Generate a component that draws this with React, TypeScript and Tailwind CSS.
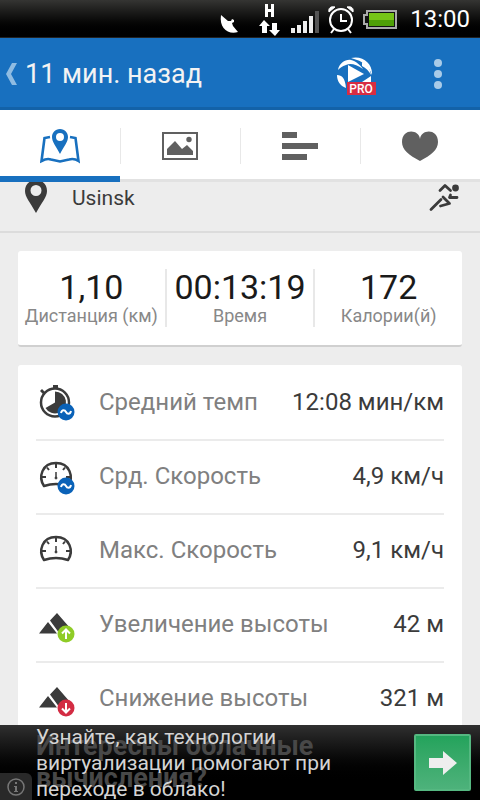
import type { ReactNode } from 'react';

const StatusBar = () => (
  <div className="flex h-[38px] shrink-0 items-center justify-end border-b border-[#222] bg-linear-to-b from-[#353533] to-black pr-[10px] text-white">
    <svg width="180" height="36" viewBox="0 0 180 36" className="mr-[11px]" aria-hidden="true">
      {/* satellite dish */}
      <path d="M2 14L9 20L12 20L13 18L15 19L15 21L13 22L14 25L19 31C9 34 0 27 2 14Z" fill="#fff" />
      {/* HSPA data */}
      <path d="M46 3h3v5h3v-5h3v13h-3v-5h-3v5h-3z" fill="#fff" />
      <path d="M45 19l6 6h-3v7h-5v-7h-3zM56 35l-6-6h3v-7h5v7h3z" fill="#fff" />
      {/* signal */}
      <path d="M72 27h4v5h-4zM78 24h4v8h-4zM84 20h4v12h-4zM90 15h4v17h-4z" fill="#eee" />
      <path d="M96 10h4v22h-4z" fill="#555" />
      {/* alarm */}
      <circle cx="122" cy="19" r="11" fill="none" stroke="#fff" strokeWidth="2" />
      <path d="M122 13v7h6M115 28l-3 4M129 28l3 4" fill="none" stroke="#fff" strokeWidth="2" />
      <path d="M110 11c-1-4 2-6 6-5zM134 11c1-4-2-6-6-5z" fill="#fff" stroke="#fff" />
      {/* battery */}
      <path d="M148 10h29v17h-29v-4h-3v-9h3z" fill="#111" stroke="#aaa" strokeWidth="2" />
      <path d="M150 12h25v13h-25z" fill="#4e9f06" />
      <path d="M150 12h25v7h-25z" fill="#76c417" />
    </svg>
    <span className="text-2xl">13:00</span>
  </div>
);

const Header = () => (
  <header className="flex h-[72px] shrink-0 items-center border-b-3 border-[#1362a8] bg-[#1870bf] pt-[3px] pl-[6px] text-[#f3f3f3]">
    <button className="flex items-center gap-2">
      <svg width="11" height="22" viewBox="0 0 11 22" aria-hidden="true">
        <path d="M6 0h5L5 11l6 11H6L0 11z" fill="#8fbce2" />
      </svg>
      <span className="text-[27px] leading-9">11 мин. назад</span>
    </button>
    <button className="mt-1 ml-auto" aria-label="PRO">
      <svg width="40" height="40" viewBox="0 0 40 40" aria-hidden="true">
        <path d="M2 14C3 7 10 3 15 4C20 5 24 9 27 13C20 8 14 7 10 9C6 10 4 12 2 14Z" fill="#fff" />
        <path d="M15 2C27-1 37 8 36 19C33 10 27 6 21 4C19 3 17 3 15 2Z" fill="#fff" />
        <path d="M26 6C31 8 34 12 35 19C33 15 30 12 26 10Z" fill="#fff" />
        <path d="M1 19C6 19 9 22 10 32C4 30 1 25 1 19ZM35 20L35 26H26Z" fill="#fff" />
        <path d="M12 9L28 18L12 26Z" fill="#fff" />
        <rect x="11" y="26" width="29" height="13" fill="#d82d42" />
        <text x="25" y="37" textAnchor="middle" fontSize="12" fontWeight="500" fill="#fff">
          PRO
        </text>
      </svg>
    </button>
    <button className="mr-[38px] ml-[58px]" aria-label="Меню">
      <svg width="8" height="30" viewBox="0 0 8 30" fill="#a9cbe8" aria-hidden="true">
        <circle cx="4" cy="4" r="4" />
        <circle cx="4" cy="15" r="4" />
        <circle cx="4" cy="26" r="4" />
      </svg>
    </button>
  </header>
);

const tabs: { label: string; icon: ReactNode }[] = [
  {
    label: 'Карта',
    icon: (
      <svg width="40" height="36" viewBox="0 0 40 36" aria-hidden="true">
        <path
          d="M10 9L4.500 10L1.500 33Q7 30 11 31.500L20 33.500L29 31.500Q34 30 38.500 33L35.500 10L30 9"
          fill="none"
          stroke="#1870bf"
          strokeWidth="2.600"
        />
        <path
          fillRule="evenodd"
          d="M20 1C25 1 28 5 28 9C28 14 24 18 20 26C16 18 12 14 12 9C12 5 15 1 20 1ZM20 5A4 4 0 1 0 20 13A4 4 0 1 0 20 5Z"
          fill="#1870bf"
        />
      </svg>
    ),
  },
  {
    label: 'Фото',
    icon: (
      <svg width="36" height="28" viewBox="0 0 36 28" fill="#606060" aria-hidden="true">
        <rect x="1" y="1" width="34" height="26" fill="none" stroke="#606060" strokeWidth="2" />
        <path d="M5 23v-6l8-8 7 8 5-4 6 6v4z" />
        <circle cx="27" cy="7.500" r="2.700" />
      </svg>
    ),
  },
  {
    label: 'Этапы',
    icon: (
      <svg width="36" height="28" viewBox="0 0 36 28" fill="#606060" aria-hidden="true">
        <path d="M0 0h15v6H0zM0 11h36v6H0zM0 22h25v6H0z" />
      </svg>
    ),
  },
  {
    label: 'Пульс',
    icon: (
      <svg width="36" height="30" viewBox="0 0 36 30" fill="#606060" aria-hidden="true">
        <path d="M18 8C17-2 0-3 0 11C0 19 7 24 18 30C29 24 36 19 36 11C36-3 19-2 18 8Z" />
      </svg>
    ),
  },
];

const Tabs = () => (
  <nav className="flex h-[72px] shrink-0 bg-white">
    {tabs.map((tab, i) => (
      <button
        key={tab.label}
        aria-label={tab.label}
        className={
          i === 0
            ? 'flex flex-1 border-b-6 border-[#1870bf] pt-[18px]'
            : 'flex flex-1 border-b-3 border-[#e2e2e2] pt-[18px]'
        }
      >
        <span
          className={
            i === 0
              ? 'flex h-9 w-full items-center justify-center'
              : 'flex h-9 w-full items-center justify-center border-x border-r-transparent border-l-[#e8e8e8]'
          }
        >
          {tab.icon}
        </span>
      </button>
    ))}
  </nav>
);

const Location = () => (
  <div className="flex h-[51px] items-start justify-between border-b-2 border-[#dcdcdc] pr-5 pl-[25px] text-[#3b3b3b]">
    <div className="flex gap-[25px]">
      <svg width="22" height="32" viewBox="0 0 22 32" fill="#3b3b3b" aria-hidden="true">
        <path
          fillRule="evenodd"
          d="M11-2C18-2 22 3 22 9C22 15 17 20 11 31C5 20 0 15 0 9C0 3 4-2 11-2ZM11 3A5.500 5.500 0 1 0 11 14A5.500 5.500 0 1 0 11 3Z"
        />
      </svg>
      <span className="text-[21px] leading-8">Usinsk</span>
    </div>
    <svg width="31" height="30" viewBox="0 0 31 30" aria-hidden="true">
      <circle cx="26.500" cy="6" r="3.400" fill="#3b3b3b" />
      <g fill="none" stroke="#3b3b3b" strokeWidth="2.800" strokeLinecap="round" strokeLinejoin="round">
        <path d="M11 8.500L16 3.500L21.500 8.500" />
        <path d="M21.500 13L20.500 15.500H28" />
        <path d="M12 17.500L2 27.500" />
        <path d="M14 15L20.500 21.500L11.500 24" />
      </g>
    </svg>
  </div>
);

const summary = [
  { value: '1,10', label: 'Дистанция (км)' },
  { value: '00:13:19', label: 'Время' },
  { value: '172', label: 'Калории(й)' },
];

const Summary = () => (
  <section className="mx-[18px] mt-[18px] flex rounded-[3px] border-b-2 border-[#d0d0d0] bg-white py-[18px] text-center">
    {summary.map((item, i) => (
      <div
        key={item.label}
        className={i === 0 ? 'h-[58px] flex-1' : 'h-[58px] flex-1 border-l-2 border-[#e8e8e8]'}
      >
        <div className="text-[34px] leading-9 text-[#1a1a1a]">{item.value}</div>
        <div className="text-lg leading-[22px] whitespace-nowrap text-[#888]">{item.label}</div>
      </div>
    ))}
  </section>
);

const Average = () => (
  <>
    <circle cx="30" cy="27" r="8.500" fill="#0a62b8" />
    <path d="M25 28C26 24 29 25 30 27S34 30 35 26" fill="none" stroke="#fff" strokeWidth="2" />
  </>
);

const Gauge = () => (
  <g fill="none" stroke="#3b3b3b" transform="translate(1 0)">
    <path d="M7 27C1 18 5 4 19 4S37 18 31 27Q19 23 7 27Z" strokeWidth="2.500" strokeLinejoin="round" />
    <path d="M19 5v4M10 8.500l2 2.500M28 8.500l-2 2.500M5 18h4M33 18h-4" strokeWidth="2" />
    <path d="M19 13v6" strokeWidth="1.500" />
    <circle cx="19" cy="19" r="1" fill="#3b3b3b" strokeWidth="1" />
  </g>
);

const Mountains = () => (
  <path d="M3 26.500L12 15L21 26.500ZM14 13.500L21 6L34 21L27 26.500H23.500Z" fill="#3b3b3b" />
);

const stats: { label: string; value: string; icon: ReactNode }[] = [
  {
    label: 'Средний темп',
    value: '12:08 мин/км',
    icon: (
      <>
        <circle cx="19" cy="17.500" r="14" fill="none" stroke="#3b3b3b" strokeWidth="2.500" />
        <path d="M17 0h5v4h-5zM4 6l2-2 3 3-2 2z" fill="#3b3b3b" />
        <path d="M19 17.500V6.500A11 11 0 1 1 9.500 23Z" fill="#3b3b3b" />
        <Average />
      </>
    ),
  },
  {
    label: 'Срд. Скорость',
    value: '4,9 км/ч',
    icon: (
      <>
        <Gauge />
        <Average />
      </>
    ),
  },
  { label: 'Макс. Скорость', value: '9,1 км/ч', icon: <Gauge /> },
  {
    label: 'Увеличение высоты',
    value: '42 м',
    icon: (
      <>
        <Mountains />
        <circle cx="30" cy="27" r="8.500" fill="#8fcc27" />
        <path d="M30 32v-9M26 26.500l4-4 4 4" fill="none" stroke="#fff" strokeWidth="2" />
      </>
    ),
  },
  {
    label: 'Снижение высоты',
    value: '321 м',
    icon: (
      <>
        <Mountains />
        <circle cx="30" cy="27" r="8.500" fill="#d32c43" />
        <path d="M30 22v9M26 27.500l4 4 4-4" fill="none" stroke="#fff" strokeWidth="2" />
      </>
    ),
  },
];

const Stats = () => (
  <section className="mx-[18px] mt-[18px] rounded-[3px] bg-white px-[18px] pt-0.5">
    <table className="block text-2xl">
      <tbody className="block">
        {stats.map((row) => (
          <tr key={row.label} className="flex h-[74px] items-center border-b-2 border-[#ebebeb]">
            <td className="w-[63px] shrink-0">
              <svg width="40" height="36" viewBox="0 0 40 36" aria-hidden="true">
                {row.icon}
              </svg>
            </td>
            <th
              scope="row"
              className="flex-1 pb-0.5 text-left font-normal whitespace-nowrap text-[#808080]"
            >
              {row.label}
            </th>
            <td className="pb-0.5 text-right whitespace-nowrap text-[#3b3b3b]">{row.value}</td>
          </tr>
        ))}
      </tbody>
    </table>
  </section>
);

const AdBanner = () => (
  <footer className="relative flex h-[75px] shrink-0 items-center justify-between overflow-hidden bg-linear-to-b from-[#303030] to-black to-80% pr-[9px] pl-9">
    <p className="absolute top-[5px] left-9 text-[27px] leading-8 font-bold text-[#484848]">
      Интересны облачные
      <br />
      вычисления?
    </p>
    <div className="absolute bottom-0 left-0 flex h-[27px] w-8 items-center justify-center rounded-tr-md bg-[#333]/80">
      <svg width="18" height="18" viewBox="0 0 18 18" aria-hidden="true">
        <circle cx="9" cy="9" r="8" fill="none" stroke="#777" strokeWidth="1.500" />
        <path d="M8 4h2v2H8zM7 8h3v5h1v1H7v-1h1V9H7z" fill="#777" />
      </svg>
    </div>
    <p className="relative text-[21px] leading-[26px] whitespace-nowrap text-[#d4d4d4]">
      Узнайте, как технологии
      <br />
      виртуализации помогают при
      <br />
      переходе в облако!
    </p>
    <a
      href="#ad"
      aria-label="Перейти"
      className="flex h-[57px] w-[57px] items-center justify-center rounded-[2px] border-2 border-[#55b881] bg-linear-to-b from-[#23a35c] to-[#4db27b]"
    >
      <svg width="28" height="24" viewBox="0 0 28 24" aria-hidden="true">
        <path d="M0 7h14V0l14 12-14 12v-7H0z" fill="#eee" />
      </svg>
    </a>
  </footer>
);

export default function App() {
  return (
    <div className="flex h-screen flex-col bg-[#ededed] font-[Roboto,sans-serif]">
      <StatusBar />
      <Header />
      <Tabs />
      <main className="min-h-0 flex-1 overflow-hidden">
        <Location />
        <Summary />
        <Stats />
      </main>
      <AdBanner />
    </div>
  );
}
